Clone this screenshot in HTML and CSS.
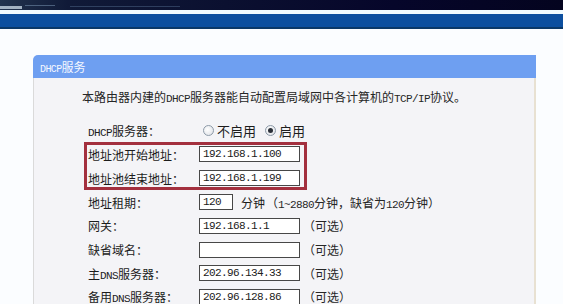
FILE: index.html
```html
<!DOCTYPE html>
<html lang="zh-CN">
<head>
<meta charset="utf-8">
<title>DHCP服务</title>
<link rel="stylesheet" href="styles.css">
</head>
<body>
<div class="banner"><span class="streak s1"></span><span class="streak s2"></span><span class="streak s3"></span></div>
<div class="stripe"></div>
<div class="bar"></div>
<div class="main">
  <div class="panel">
    <div class="panel-head"><span class="en-h">DHCP</span>服务</div>
    <div class="panel-body">
      <p class="desc">本路由器内建的<span class="en">DHCP</span>服务器能自动配置局域网中各计算机的<span class="en">TCP/IP</span>协议。</p>
      <div class="form">
        <div class="row">
          <span class="label"><span class="en">DHCP</span>服务器：</span>
          <span class="radio"></span><span class="opt">不启用</span>
          <span class="radio checked"></span><span class="opt">启用</span>
        </div>
        <div class="pool">
          <div class="row">
            <span class="label">地址池开始地址：</span>
            <span class="field">192.168.1.100</span>
          </div>
          <div class="row">
            <span class="label">地址池结束地址：</span>
            <span class="field">192.168.1.199</span>
          </div>
        </div>
        <div class="row">
          <span class="label">地址租期：</span>
          <span class="field short">120</span>
          <span class="unit">分钟</span>
          <span class="hint">（<span class="en">1~2880</span>分钟，缺省为<span class="en">120</span>分钟）</span>
        </div>
        <div class="row tight">
          <span class="label">网关：</span>
          <span class="field">192.168.1.1</span>
          <span class="hint opt-note">（可选）</span>
        </div>
        <div class="row tight">
          <span class="label">缺省域名：</span>
          <span class="field"></span>
          <span class="hint opt-note">（可选）</span>
        </div>
        <div class="row tight">
          <span class="label">主<span class="en">DNS</span>服务器：</span>
          <span class="field">202.96.134.33</span>
          <span class="hint opt-note">（可选）</span>
        </div>
        <div class="row tight">
          <span class="label">备用<span class="en">DNS</span>服务器：</span>
          <span class="field">202.96.128.86</span>
          <span class="hint opt-note">（可选）</span>
        </div>
      </div>
    </div>
  </div>
</div>
</body>
</html>
```
FILE: styles.css
```css
html, body {
  margin: 0;
  padding: 0;
}
body {
  background: #fbfdff;
  font-family: "Noto Sans CJK SC", sans-serif;
  font-size: 12px;
  color: #1c1c1c;
  overflow: hidden;
}
.banner {
  height: 10px;
  background: linear-gradient(to right, #22344e 0%, #101a38 12%, #0b1030 40%, #06062a 70%, #04041f 100%);
  position: relative;
  overflow: hidden;
}
.streak {
  position: absolute;
  height: 1px;
  background: rgba(140, 170, 200, 0.45);
}
.s1 { left: 0; top: 6px; width: 22px; height: 3px; background: rgba(220, 235, 245, 0.7); }
.s2 { left: 25px; top: 5px; width: 30px; }
.s3 { left: 70px; top: 6px; width: 110px; background: rgba(110, 140, 175, 0.35); }
.stripe {
  height: 4px;
  background: #f0fbff;
}
.bar {
  height: 13px;
  background: #0c4f9f;
  border-bottom: 2px solid #0a3868;
}
.main {
  padding: 26px 0 0 33px;
}
.panel {
  width: 503px;
}
.panel-head {
  height: 23px;
  line-height: 23px;
  background: #6e9ff1;
  border-radius: 5px 0 0 0;
  color: #f4f7ff;
  padding-left: 7px;
  font-size: 12px;
}
.en-h {
  font-family: "Liberation Mono", monospace;
  font-size: 10px;
  letter-spacing: -0.6px;
}
.panel-body {
  background: #f4f4f7;
  border-left: 1px solid #dadada;
  border-right: 2px solid #e8e1d2;
  padding: 9px 0 0 48px;
  height: 240px;
}
.en {
  font-family: "Liberation Mono", monospace;
  font-size: 11px;
  letter-spacing: -0.6px;
}
.desc {
  margin: 0;
  line-height: 20px;
  color: #262626;
}
.form {
  margin-top: 9px;
  margin-left: 6px;
}
.row {
  display: flex;
  align-items: center;
  height: 24px;
  white-space: nowrap;
}
.row.tight {
  height: 23.7px;
}
.label {
  width: 111px;
  flex: none;
}
.pool {
  margin-left: -4px;
  width: 223px;
  box-shadow: inset 0 0 0 3px #a3303e;
}
.pool .row {
  padding-left: 4px;
}
.field {
  box-sizing: border-box;
  width: 101px;
  height: 16px;
  border: 1px solid #474747;
  background: #fff;
  font-family: "Liberation Mono", monospace;
  font-size: 11px;
  letter-spacing: -0.6px;
  line-height: 14px;
  padding-left: 3px;
  color: #202020;
  flex: none;
}
.field.short {
  width: 34px;
}
.unit {
  margin-left: 8px;
}
.hint {
  margin-left: 1px;
  color: #262626;
}
.opt-note {
  margin-left: 3px;
}
.radio {
  box-sizing: border-box;
  width: 11px;
  height: 11px;
  border-radius: 50%;
  border: 1px solid #8d9aa8;
  background: radial-gradient(circle at 40% 40%, #ffffff 0%, #e6e8ec 70%, #cfd4da 100%);
  margin-left: 4px;
  margin-right: 3px;
  position: relative;
  flex: none;
}
.radio.checked::after {
  content: "";
  position: absolute;
  left: 2px;
  top: 2px;
  width: 5px;
  height: 5px;
  border-radius: 50%;
  background: #2a2f38;
}
.opt {
  color: #1c1c1c;
  font-size: 13px;
}
.opt + .radio {
  margin-left: 9px;
}
```
